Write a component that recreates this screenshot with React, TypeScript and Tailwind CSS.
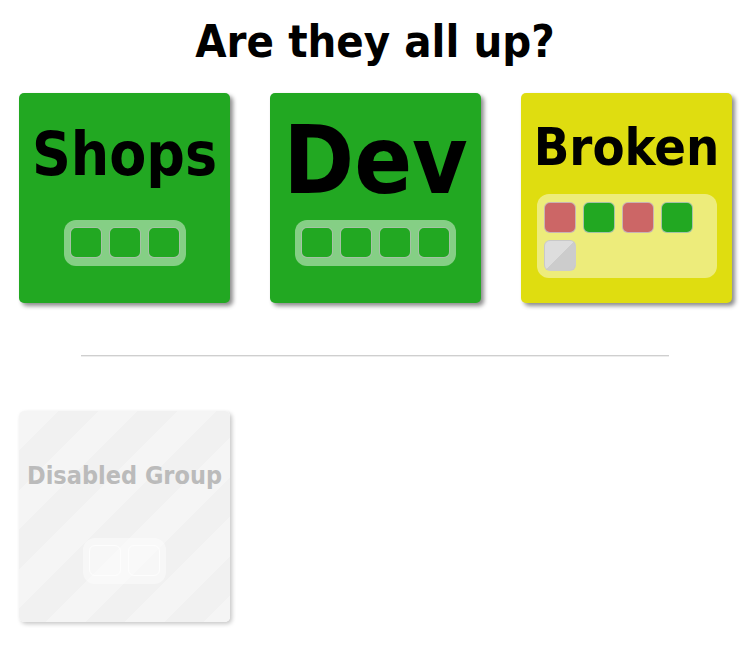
import React from "react";

type Status = "up" | "down" | "unknown" | "off";

const squareColor: Record<Status, string> = {
  up: "bg-[#22a822]",
  down: "bg-[#cc6666]",
  unknown: "bg-[linear-gradient(to_bottom_right,#dddddd_50%,#cccccc_50%)]",
  off: "bg-transparent",
};

function Square({ status }: { status: Status }) {
  return (
    <div
      className={`w-8 h-[31px] rounded-[6px] border ${
        status === "off" ? "border-white/70" : "border-[#c8c8c8]/80"
      } ${squareColor[status]}`}
    />
  );
}

function Pill({ items }: { items: Status[] }) {
  return (
    <div className="flex gap-[7px] px-[6px] pt-[7px] pb-[8px] rounded-[12px] bg-white/45">
      {items.map((s, i) => (
        <Square key={i} status={s} />
      ))}
    </div>
  );
}

export default function App() {
  return (
    <div
      className="w-[750px] min-h-[656px] bg-white text-black"
      style={{ fontFamily: '"DejaVu Sans Condensed", "DejaVu Sans", sans-serif' }}
    >
      <h1 className="pt-[19px] text-center text-[45px] leading-none font-bold">
        Are they all up?
      </h1>

      <div className="flex gap-[40px] pl-[19px] mt-[29px]">
        {/* Shops */}
        <div className="w-[211px] h-[210px] rounded-[5px] bg-[#22a822] shadow-[3px_3px_4px_rgba(0,0,0,0.45)] flex flex-col items-center">
          <div className="mt-[31px] text-[60px] leading-none font-bold">Shops</div>
          <div className="mt-[36px]">
            <Pill items={["up", "up", "up"]} />
          </div>
        </div>

        {/* Dev */}
        <div className="w-[211px] h-[210px] rounded-[5px] bg-[#22a822] shadow-[3px_3px_4px_rgba(0,0,0,0.45)] flex flex-col items-center">
          <div className="mt-[20px] text-[95px] leading-none font-bold">Dev</div>
          <div className="mt-[12px]">
            <Pill items={["up", "up", "up", "up"]} />
          </div>
        </div>

        {/* Broken */}
        <div className="w-[211px] h-[210px] rounded-[5px] bg-[#dfdd10] shadow-[3px_3px_4px_rgba(0,0,0,0.45)] flex flex-col items-center">
          <div className="mt-[28px] text-[52px] leading-none font-bold">Broken</div>
          <div className="mt-[21px] w-[180px] flex flex-wrap gap-[7px] px-[7px] pt-[8px] pb-[7px] rounded-[12px] bg-white/45">
            <Square status="down" />
            <Square status="up" />
            <Square status="down" />
            <Square status="up" />
            <Square status="unknown" />
          </div>
        </div>
      </div>

      <hr className="mx-auto mt-[52px] w-[588px] h-0 border-0 border-t border-t-[#cfcfcf] border-b border-b-[#ededed]" />

      <div className="pl-[19px] mt-[54px] pb-[34px]">
        <div className="w-[211px] h-[211px] rounded-[5px] bg-[repeating-linear-gradient(135deg,#f5f5f5_0px,#f5f5f5_28px,#f1f1f1_28px,#f1f1f1_56px)] shadow-[2px_2px_4px_rgba(0,0,0,0.22)] flex flex-col items-center">
          <div className="mt-[52px] text-[25px] leading-none font-bold text-[#bbbbbb]">
            Disabled Group
          </div>
          <div className="mt-[50px]">
            <Pill items={["off", "off"]} />
          </div>
        </div>
      </div>
    </div>
  );
}
